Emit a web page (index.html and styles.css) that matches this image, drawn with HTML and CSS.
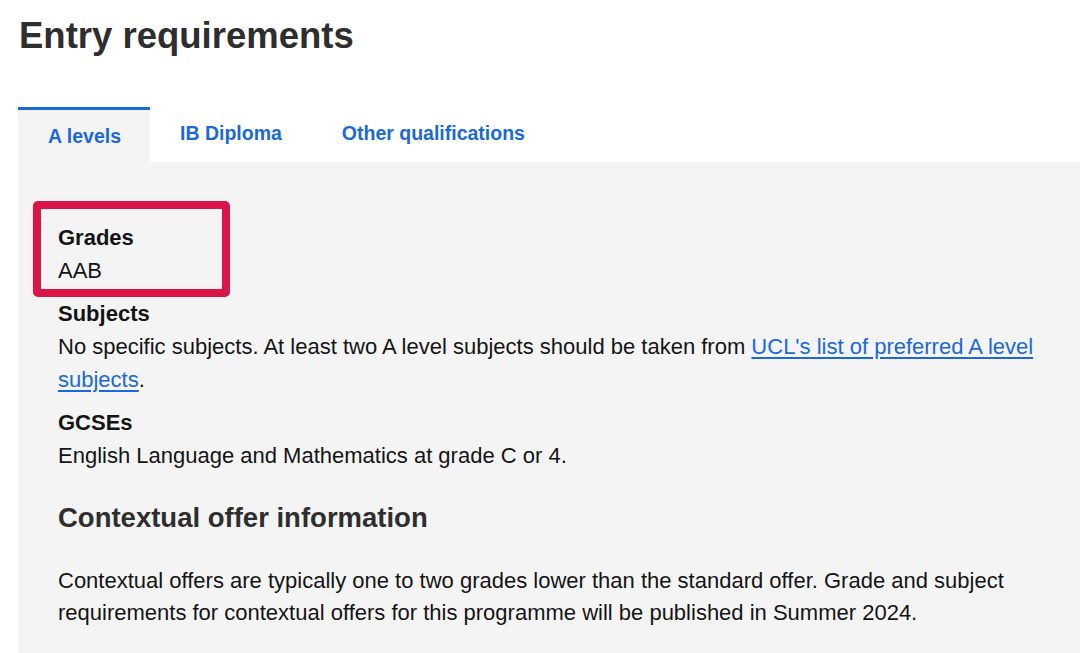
FILE: index.html
```html
<!DOCTYPE html>
<html lang="en">
<head>
    <meta charset="UTF-8">
    <meta name="viewport" content="width=device-width, initial-scale=1.0">
    <title>Entry requirements</title>
    <link rel="stylesheet" href="styles.css">
</head>
<body>
    <section class="entry">
        <h1>Entry requirements</h1>

        <ul class="tabs">
            <li class="tab active">A levels</li>
            <li class="tab">IB Diploma</li>
            <li class="tab">Other qualifications</li>
        </ul>

        <div class="panel">
            <dl class="reqs">
                <div class="req highlight">
                    <dt>Grades</dt>
                    <dd>AAB</dd>
                </div>
                <div class="req">
                    <dt>Subjects</dt>
                    <dd>No specific subjects. At least two A level subjects should be taken from <a href="#">UCL's list of preferred A level subjects</a>.</dd>
                </div>
                <div class="req">
                    <dt>GCSEs</dt>
                    <dd>English Language and Mathematics at grade C or 4.</dd>
                </div>
            </dl>

            <h3>Contextual offer information</h3>
            <p>Contextual offers are typically one to two grades lower than the standard offer. Grade and subject requirements for contextual offers for this programme will be published in Summer 2024.</p>
        </div>
    </section>
</body>
</html>
```

FILE: styles.css
```css
:root {
    --blue: #1b69d6;
    --text: #141414;
    --heading: #2e2e2e;
    --panel: #f4f4f4;
    --mark: #d91448;
}

* {
    box-sizing: border-box;
    margin: 0;
    padding: 0;
}

body {
    font-family: "Liberation Sans", Arial, sans-serif;
    color: var(--text);
    background: white;
    overflow: hidden;
}

.entry {
    padding: 14px 0 0 18px;
}

h1 {
    font-size: 36.5px;
    line-height: 44px;
    font-weight: bold;
    color: var(--heading);
    margin-left: 1px;
    margin-bottom: 49px;
}

/* tabs */
.tabs {
    list-style: none;
    display: flex;
    height: 55px;
}

.tab {
    font-size: 19.5px;
    font-weight: bold;
    color: var(--blue);
    padding: 12px 30px 0;
    border-top: 3px solid transparent;
    cursor: pointer;
}

.tab.active {
    background: var(--panel);
    border-top-color: var(--blue);
    padding: 15px 29px 0 30px;
}

/* panel */
.panel {
    background: var(--panel);
    padding: 59px 40px 40px;
    min-height: 500px;
    font-size: 22px;
    line-height: 33px;
}

.req + .req {
    margin-top: 10px;
}

dt {
    font-weight: bold;
}

.highlight {
    position: relative;
}

/* red marker drawn over the grades block */
.highlight::before {
    content: "";
    box-sizing: border-box;
    position: absolute;
    left: -25px;
    top: -20px;
    width: 197px;
    height: 96px;
    border: 8px solid var(--mark);
    border-radius: 5px;
}

a {
    color: var(--blue);
    text-underline-offset: 3px;
}

h3 {
    font-size: 27.5px;
    line-height: 36px;
    color: var(--heading);
    margin-top: 28px;
    margin-bottom: 29px;
}

p {
    max-width: 990px;
    line-height: 32px;
}
```
